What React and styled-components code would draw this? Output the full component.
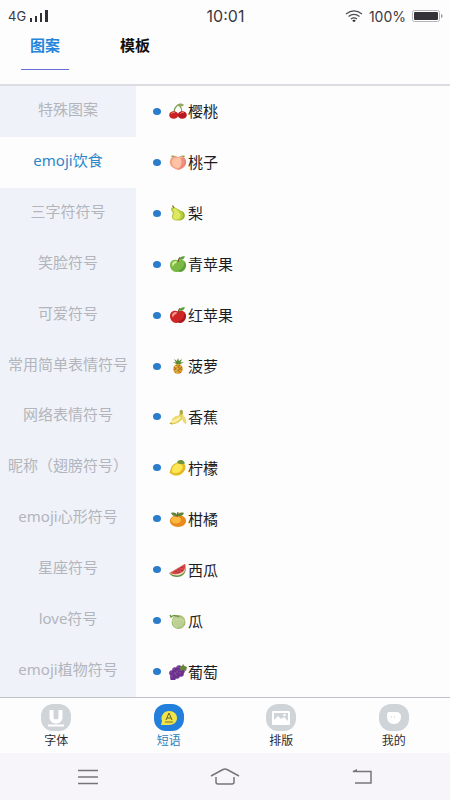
import { useState } from "react";
import styled, { createGlobalStyle } from "styled-components";

const GlobalStyle = createGlobalStyle`
  * {
    box-sizing: border-box;
  }

  body {
    margin: 0;
    background: #fefdfe;
    color: #1c1c1e;
    font-family: "Noto Sans", "Noto Sans CJK SC", sans-serif;
  }

  button {
    margin: 0;
    padding: 0;
    border: 0;
    background: transparent;
    font-family: inherit;
    cursor: pointer;
  }

  svg {
    display: block;
  }
`;

const Page = styled.div`
  display: flex;
  flex-direction: column;
  min-height: 100vh;
`;

// <StatusBar />
const StatusContainer = styled.div`
  display: grid;
  grid-template-columns: 1fr auto 1fr;
  align-items: center;
  height: 32px;
  padding: 0 7px 0 8px;
  color: #3a3a40;
  font-family: Inter, sans-serif;
  font-size: 13px;
`;

const StatusGroup = styled.div`
  display: flex;
  align-items: center;
  gap: ${({ $gap }) => $gap}px;
  justify-content: ${({ $end }) => ($end ? "flex-end" : "flex-start")};
`;

const Clock = styled.time`
  font-size: 16px;
`;

const Network = styled.span`
  font-size: 13px;
`;

const BatteryLevel = styled.span`
  font-size: 14px;
`;

// <Tabs />
const TabsContainer = styled.nav`
  display: grid;
  grid-template-columns: repeat(5, 1fr);
  height: 54px;
  padding-bottom: 14px;
  border-bottom: 2px solid #dddce2;
`;

const Tab = styled.button`
  display: flex;
  flex-direction: column;
  align-items: center;
  justify-content: space-between;
  color: ${({ $active }) => ($active ? "#2585d8" : "#111")};
  font-size: 15px;
  font-weight: 700;
  line-height: 26px;

  &::after {
    content: "";
    width: 48px;
    height: 1px;
    background: ${({ $active }) => ($active ? "#6870d6" : "transparent")};
  }
`;

// <Categories /> and the phrase list
const Main = styled.main`
  display: flex;
  flex: 1;
`;

const Sidebar = styled.nav`
  display: grid;
  grid-auto-rows: 1fr;
  width: 136px;
  background: #eff2f9;
`;

const Category = styled.button`
  padding-bottom: 5px;
  background: ${({ $active }) => ($active ? "#fefdfe" : "transparent")};
  color: ${({ $active }) => ($active ? "#2b86c9" : "#b3b5bb")};
  font-size: 15px;
  line-height: 20px;
  white-space: nowrap;
`;

// full-width brackets sit in the middle of their square in this face
const Bracket = styled.span`
  font-family: "Noto Sans CJK TC", sans-serif;
`;

const PhraseList = styled.ul`
  display: grid;
  grid-auto-rows: 1fr;
  flex: 1;
  margin: 0;
  padding: 0 0 0 17px;
  list-style: none;
`;

const Phrase = styled.li`
  display: flex;
  align-items: center;
  min-height: 50px;
  font-size: 15px;
  line-height: 20px;

  &::before {
    content: "";
    width: 8px;
    height: 7px;
    margin-right: 8px;
    border-radius: 50%;
    background: #2b7cc9;
  }
`;

const FruitIcon = styled.svg`
  width: 18px;
  height: 16px;
  margin-right: 1px;
`;

// <BottomNav />
const BottomContainer = styled.nav`
  display: grid;
  grid-template-columns: repeat(4, 1fr);
  height: 56px;
  border-top: 1px solid #bfc0c6;
`;

const BottomItem = styled.button`
  display: flex;
  flex-direction: column;
  align-items: center;
  padding-top: 6px;
  color: ${({ $active }) => ($active ? "#2b82bd" : "#2c2c30")};
  font-size: 12px;
  line-height: 20px;
`;

const Badge = styled.span`
  display: flex;
  align-items: center;
  justify-content: center;
  width: 30px;
  height: 27px;
  border-radius: 12px;
  background: ${({ $active }) => ($active ? "#2280dc" : "#cfd4d9")};
`;

// <SystemBar />
const SystemContainer = styled.div`
  display: grid;
  grid-template-columns: repeat(3, 1fr);
  height: 47px;
  padding: 0 20px;
  background: #f7f5f9;
`;

const SystemButton = styled.button`
  display: flex;
  align-items: center;
  justify-content: center;
`;

const categories = [
  "特殊图案",
  "emoji饮食",
  "三字符符号",
  "笑脸符号",
  "可爱符号",
  "常用简单表情符号",
  "网络表情符号",
  "昵称（翅膀符号）",
  "emoji心形符号",
  "星座符号",
  "love符号",
  "emoji植物符号",
];

const apple = (base, light, dark) => (
  <>
    <path d="M9 4.500C6 2.500 1 4 1 9c0 4 3 7 6 7 1 0 1-.5 2-.5s1 .5 2 .5c3 0 6-3 6-7 0-5-5-6.500-8-4.500z" fill={base} />
    <path d="M3 9c0-2.500 1.500-4 4-4 1.500 0 1 1.500 0 2-2 .8-2.500 2-3 3.500z" fill={light} />
    <path d="M15 6c1 4-2 8-8 9 1 1 1.500.5 2 .5 5 1.500 8-3 8-6.500 0-1.500-1-2.500-2-3z" fill={dark} opacity=".6" />
    <path d="M9 6c0-2 .5-3 2-4.500" stroke="#76502b" strokeWidth="1.200" fill="none" />
    <path d="M10 3.500c1-3 4-3.500 6-3-1 2.500-3 4-6 3z" fill="#5c9c35" />
  </>
);

const phrases = [
  {
    name: "樱桃",
    icon: (
      <>
        <path d="M5 10c0-4 2-7 5-8.500M13 10c0-4-1-6-3-8.500" stroke="#779344" strokeWidth="1.200" fill="none" />
        <path d="M8 2c2-2 5-2 7 0-2 2-5 2-7 0z" fill="#91aa59" />
        <ellipse cx="4.700" cy="12" rx="4.500" ry="3.800" fill="#c92224" />
        <ellipse cx="13.300" cy="12" rx="4.500" ry="3.800" fill="#b8181d" />
        <path d="M2 11c1-2 3-2 4-1M11 11c1-2 3-2 4-1" stroke="#ef7770" fill="none" />
      </>
    ),
  },
  {
    name: "桃子",
    icon: (
      <>
        <path d="M2 2c3-1 5 0 7 2 2-2 4-3 7-2-1 3-4 4-7 4S3 5 2 2z" fill="#94a95b" />
        <path d="M9 3C5 1 .8 4 .8 8c0 5 5 7 8.200 8 3-1 8.200-3 8.200-8C17.200 4 13 1 9 3z" fill="#f2a184" />
        <path d="M9 4C5 3 3 5 3 8c0 3 2 6 6 6 4 0 7-4 6-8-1-3-4-4-6-2z" fill="#ffc2a5" />
        <path d="M11 4c3 4 1 8-2 12 5-1 9-5 8-9-1-3-3-4-6-3z" fill="#e7776e" opacity=".65" />
      </>
    ),
  },
  {
    name: "梨",
    icon: (
      <>
        <path d="M6 2.500c-4-1-5 2-3 4 1 1 1 2 0 4-1 4 3 5.500 7 5 5-.5 7-4 4.500-7.500C12.500 5.500 9 4 6 2.500z" fill="#b7c93c" />
        <path d="M6 3.500C3.500 3 3.500 5 5 6.500c1 2-1 4-1 6 0 2.500 5 2.500 7 .5 2-3-1-7-5-9.500z" fill="#dce961" />
        <path d="M5 3L3.500.5" stroke="#8b6a35" strokeWidth="1.300" />
        <path d="M12 6c4 3 3 8-2 9.500 4 0 6.500-3 5.500-6.500-.5-2-2-3-3.500-3z" fill="#8dad2e" />
      </>
    ),
  },
  { name: "青苹果", icon: apple("#7cb944", "#d0ed98", "#438f2c") },
  { name: "红苹果", icon: apple("#cf2526", "#f29a8e", "#8e1119") },
  {
    name: "菠萝",
    icon: (
      <>
        <path d="M9 7L4 4l3 .5L5 1l3 2 1-3 1 3 3-2-1.500 3.500L15 4l-5 3z" fill="#5b8b36" />
        <ellipse cx="9" cy="11" rx="4.800" ry="5" fill="#dfa12d" />
        <path d="M5 9l7 6M7 7l6 5M13 9l-7 6M11 7l-6 5" stroke="#9b6722" strokeWidth=".9" />
        <path d="M6 9l2-1v7" stroke="#f5d45f" fill="none" opacity=".7" />
      </>
    ),
  },
  {
    name: "香蕉",
    icon: (
      <>
        <path d="M11 2l2-.5 1 5c0 5-5 8-11 9l-3-1 2-1c5-2 8-5 9-11.500z" fill="#e2ca50" />
        <path d="M11 7l-9 5-1 1.500c5 1 9-1 11-5z" fill="#fbf0a4" />
        <path d="M11 7C7 6 4 8 2 12l7-3 4-2c0 4 1 7 4 8 1-4-1-7-3-9z" fill="#ecd96f" />
        <path d="M11 2l2-.8.500 3-1.500 1zM1 14l2 1" stroke="#a8a645" fill="#a8a645" />
      </>
    ),
  },
  {
    name: "柠檬",
    icon: (
      <>
        <path d="M13 2.500C8 1.500 3 4 1.500 9.500L.5 13l2 1c5 4 14 0 14-7.500 0-2-1.500-3-3.500-4z" fill="#e4bb22" />
        <path d="M12 3.500C8 2.500 4 5 3 9.500c-1 3.500 2 4.500 5 3.500 4-1 8-5.500 4-9.500z" fill="#fce653" />
        <path d="M8 2.500c1-3 5-3 7-1l1 2c-3 1-6 1-8-1z" fill="#6f9638" />
      </>
    ),
  },
  {
    name: "柑橘",
    icon: (
      <>
        <ellipse cx="9" cy="10" rx="8.200" ry="6" fill="#e98a1c" />
        <ellipse cx="7" cy="9" rx="5" ry="3.500" fill="#fab83f" />
        <path d="M8 5C5 5.500 3 4.500 2 2c3-1 6 0 6 2 1-2 4-3 7-2-1 3-4 3.500-6 3z" fill="#5e8539" />
        <path d="M8 6l1-5" stroke="#775d32" strokeWidth="1.200" />
      </>
    ),
  },
  {
    name: "西瓜",
    icon: (
      <>
        <path d="M0 11L16 2c3 8-2 13-8 13-3 0-6-1-8-4z" fill="#658e48" />
        <path d="M0 11L16 2c2 7-2 11-8 11.500-3 0-6-1-7.500-2.500z" fill="#f7dfc0" />
        <path d="M1 11L16 2c1 6-2 9-8 10-3 .5-5 0-7-1z" fill="#d94448" />
        <path d="M7 9v1M10 7v1M10 10v1M13 5v1M13 8v1" stroke="#61252a" />
      </>
    ),
  },
  {
    name: "瓜",
    icon: (
      <>
        <circle cx="9.500" cy="9" r="7" fill="#a3bd72" />
        <ellipse cx="9" cy="9" rx="5" ry="5.500" fill="#bdd093" />
        <path d="M6 4c-3 4-2 9 2 11M13 4c2 3 2 7 0 10M3 8c4-2 9-2 13 0" stroke="#d1ddab" strokeWidth=".7" fill="none" />
        <path d="M10 4C7 2 4 2 2 4l-1-2" stroke="#73944b" strokeWidth="1.500" fill="none" />
      </>
    ),
  },
  {
    name: "葡萄",
    icon: (
      <>
        {[[10, 4], [6, 6], [13, 7], [3, 9], [9, 9], [12, 10], [4, 12], [8, 12], [4, 14]].map(([x, y]) => (
          <g key={`${x}-${y}`}>
            <circle cx={x} cy={y} r="2.800" fill="#6c318c" />
            <circle cx={x - 1} cy={y - 1} r=".7" fill="#9a5daf" />
          </g>
        ))}
        <path d="M10 3l3-1 1-2 1.500 2 2.500 1-1 4-3-1-2 1z" fill="#66823f" />
      </>
    ),
  },
];

const bottomItems = [
  {
    name: "字体",
    icon: (
      <svg width="22" height="22" viewBox="0 0 22 22" fill="none" stroke="#fff">
        <path d="M6.500 3v8c0 4.500 9 4.500 9 0V3" strokeWidth="4" />
        <path d="M3 18.500h16" strokeWidth="2" />
      </svg>
    ),
  },
  {
    name: "短语",
    icon: (
      <svg width="18" height="18" viewBox="0 0 18 18">
        <path d="M9 2c5 0 8 3 8 7s-3 7-8 7H1l1-4C0 7 4 2 9 2z" fill="#f1e348" />
        <path d="M6 11l3-7 3 7M7 9h4" stroke="#5e632c" fill="none" />
        <path d="M5 13h8" stroke="#77752c" />
      </svg>
    ),
  },
  {
    name: "排版",
    icon: (
      <svg width="20" height="16" viewBox="0 0 20 16">
        <rect x="1" y="1" width="18" height="14" rx="1" fill="#fff" />
        <path d="M3 3h14v8l-4-4-3 2-3-3-4 4z" fill="#cfd4d9" />
        <circle cx="13.500" cy="5" r="1.200" fill="#fff" />
      </svg>
    ),
  },
  {
    name: "我的",
    icon: (
      <svg width="16" height="14" viewBox="0 0 16 14">
        <path d="M3 1h7c3 0 5 1.500 5 4.500 0 4-2.500 7.500-7 7.500S1 10 1 5.500C1 3 1.500 1 3 1z" fill="#fff" />
        <path d="M5 6h1M8 6h1" stroke="#c3c9ce" />
      </svg>
    ),
  },
];

const StatusBar = () => (
  <StatusContainer>
    <StatusGroup $gap={4}>
      <Network>4G</Network>
      <svg width="19" height="13" viewBox="0 0 19 13" fill="#303036">
        <path d="M0 8h2v4H0zM5 6h2v6H5zM10 3h2v9h-2zM15 0h3v12h-3z" />
      </svg>
    </StatusGroup>
    <Clock>10:01</Clock>
    <StatusGroup $end $gap={6}>
      <svg width="18" height="12" viewBox="0 0 18 12" fill="none" stroke="#4b4b50" strokeWidth="1.200">
        <path d="M1 4c5-4 11-4 16 0M3.500 6.500c4-3 7-3 11 0M6 9c2-1.500 4-1.500 6 0" />
        <ellipse cx="9" cy="10.800" rx="1.500" ry="1" fill="#222" stroke="none" />
      </svg>
      <BatteryLevel>100%</BatteryLevel>
      <svg width="31" height="12" viewBox="0 0 31 12">
        <rect x=".5" y=".5" width="27" height="11" rx="2" fill="#fff" stroke="#b5b5b9" />
        <rect x="2" y="2" width="24" height="8" rx="1" fill="#343438" />
        <path d="M29 4c2 0 2 4 0 4z" fill="#99999d" />
      </svg>
    </StatusGroup>
  </StatusContainer>
);

const CategoryLabel = ({ name }) =>
  name.split(/([（）])/).map((part, index) =>
    /[（）]/.test(part) ? (
      <Bracket key={index} lang="zh-Hant">
        {part}
      </Bracket>
    ) : (
      part
    )
  );

const SystemBar = () => (
  <SystemContainer>
    <SystemButton aria-label="菜单">
      <svg width="22" height="16" viewBox="0 0 22 16" stroke="#77757a" strokeWidth="1.500">
        <path d="M1 1.500h20M1 8h20M1 14.500h20" />
      </svg>
    </SystemButton>
    <SystemButton aria-label="主页">
      <svg width="30" height="17" viewBox="0 0 30 17" fill="none" stroke="#77757a" strokeWidth="1.500">
        <path d="M1 8L13 1.500q2-1 4 0L29 8M6 9v5q0 2 2 2h14q2 0 2-2V9" />
      </svg>
    </SystemButton>
    <SystemButton aria-label="返回">
      <svg width="22" height="17" viewBox="0 0 22 17" fill="none" stroke="#77757a" strokeWidth="1.500">
        <path d="M2 3.500h18V15H4" />
        <path d="M1 3.500L6 1v3z" fill="#77757a" stroke="none" />
      </svg>
    </SystemButton>
  </SystemContainer>
);

const App = () => {
  const [tab, setTab] = useState("图案");
  const [category, setCategory] = useState("emoji饮食");
  const [section, setSection] = useState("短语");

  return (
    <Page>
      <GlobalStyle />
      <StatusBar />
      <TabsContainer>
        {["图案", "模板"].map((name) => (
          <Tab key={name} $active={tab === name} onClick={() => setTab(name)}>
            {name}
          </Tab>
        ))}
      </TabsContainer>
      <Main>
        <Sidebar>
          {categories.map((name) => (
            <Category key={name} $active={category === name} onClick={() => setCategory(name)}>
              <CategoryLabel name={name} />
            </Category>
          ))}
        </Sidebar>
        <PhraseList>
          {phrases.map(({ name, icon }) => (
            <Phrase key={name}>
              <FruitIcon viewBox="0 0 18 16">{icon}</FruitIcon>
              {name}
            </Phrase>
          ))}
        </PhraseList>
      </Main>
      <BottomContainer>
        {bottomItems.map(({ name, icon }) => (
          <BottomItem key={name} $active={section === name} onClick={() => setSection(name)}>
            <Badge $active={section === name}>{icon}</Badge>
            {name}
          </BottomItem>
        ))}
      </BottomContainer>
      <SystemBar />
    </Page>
  );
};

export default App;
